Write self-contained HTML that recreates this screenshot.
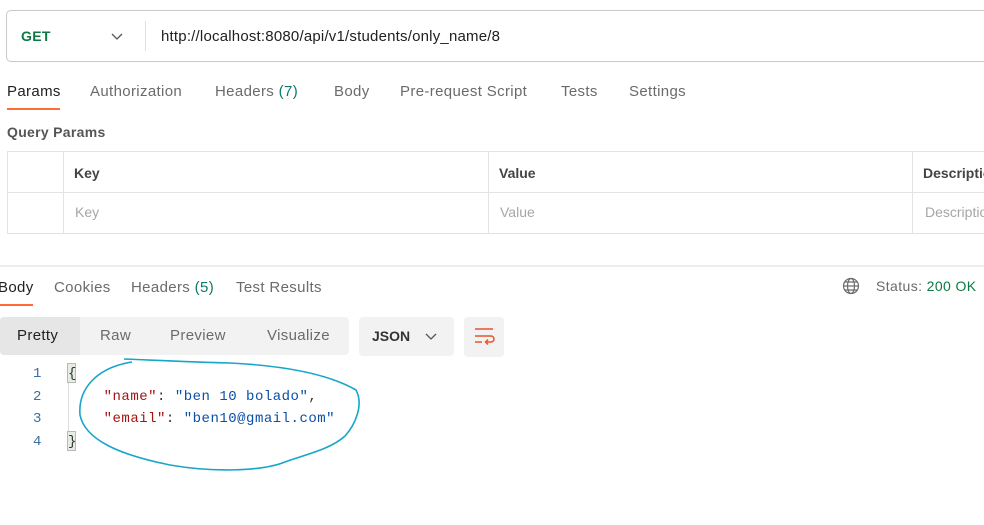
<!DOCTYPE html>
<html><head><meta charset="utf-8"><style>
*{margin:0;padding:0;box-sizing:border-box}
body{width:984px;height:525px;overflow:hidden;background:#fff;font-family:"Liberation Sans",Arial,sans-serif;position:relative;color:#212121}
.a{position:absolute;white-space:nowrap}
.tab{font-size:15px;color:#6b6b6b;letter-spacing:0.35px}
.mono{font-family:"Liberation Mono","DejaVu Sans Mono",monospace;font-size:14px;letter-spacing:0.5px}
</style></head><body>
<div class="a" style="left:6px;top:10px;width:990px;height:52px;border:1px solid #c9c9c9;border-radius:5px"></div>
<div class="a" style="left:21px;top:28px;font-size:14px;font-weight:bold;color:#0c7a43;letter-spacing:0.3px">GET</div>
<svg class="a" style="left:111px;top:31px" width="12" height="10"><path d="M1 3 L6 8 L11 3" stroke="#555" stroke-width="1.3" fill="none"/></svg>
<div class="a" style="left:145px;top:21px;width:1px;height:30px;background:#e0e0e0"></div>
<div class="a" style="left:161px;top:28px;font-size:15px;color:#212121;letter-spacing:0.2px">http://localhost:8080/api/v1/students/only_name/8</div>

<div class="a tab" style="left:7px;top:83px;color:#212121">Params</div>
<div class="a" style="left:7px;top:108px;width:53px;height:2px;background:#ff6c37"></div>
<div class="a tab" style="left:90px;top:83px">Authorization</div>
<div class="a tab" style="left:215px;top:83px">Headers <span style="color:#0c7a6a">(7)</span></div>
<div class="a tab" style="left:334px;top:83px">Body</div>
<div class="a tab" style="left:400px;top:83px">Pre-request Script</div>
<div class="a tab" style="left:561px;top:83px">Tests</div>
<div class="a tab" style="left:629px;top:83px">Settings</div>

<div class="a" style="left:7px;top:124px;font-size:14px;font-weight:bold;color:#555;letter-spacing:0.3px">Query Params</div>
<div class="a" style="left:7px;top:151px;width:990px;height:83px;border:1px solid #e3e3e3"></div>
<div class="a" style="left:7px;top:192px;width:990px;height:1px;background:#e3e3e3"></div>
<div class="a" style="left:63px;top:151px;width:1px;height:83px;background:#e3e3e3"></div>
<div class="a" style="left:488px;top:151px;width:1px;height:83px;background:#e3e3e3"></div>
<div class="a" style="left:912px;top:151px;width:1px;height:83px;background:#e3e3e3"></div>
<div class="a" style="left:74px;top:165px;font-size:14px;font-weight:bold;color:#444">Key</div>
<div class="a" style="left:499px;top:165px;font-size:14px;font-weight:bold;color:#444">Value</div>
<div class="a" style="left:923px;top:165px;font-size:14px;font-weight:bold;color:#444">Description</div>
<div class="a" style="left:75px;top:204px;font-size:14px;color:#a6a6a6">Key</div>
<div class="a" style="left:500px;top:204px;font-size:14px;color:#a6a6a6">Value</div>
<div class="a" style="left:925px;top:204px;font-size:14px;color:#a6a6a6">Description</div>

<div class="a" style="left:0;top:265px;width:984px;height:2px;background:#ededed"></div>
<div class="a tab" style="left:-2px;top:279px;color:#212121">Body</div>
<div class="a" style="left:0;top:304px;width:33px;height:2px;background:#ff6c37"></div>
<div class="a tab" style="left:54px;top:279px">Cookies</div>
<div class="a tab" style="left:131px;top:279px">Headers <span style="color:#0c7a6a">(5)</span></div>
<div class="a tab" style="left:236px;top:279px">Test Results</div>
<svg class="a" style="left:842px;top:277px" width="18" height="18" fill="none" stroke="#6b6b6b" stroke-width="1.2"><circle cx="9" cy="9" r="7.5"/><ellipse cx="9" cy="9" rx="3.5" ry="7.5"/><path d="M1.5 9H16.5M3 5H15M3 13H15"/></svg>
<div class="a" style="left:876px;top:278px;font-size:14px;color:#6b6b6b;letter-spacing:0.4px">Status: <span style="color:#0c7a43">200 OK</span></div>

<div class="a" style="left:0;top:317px;width:349px;height:38px;background:#f2f2f2;border-radius:4px"></div>
<div class="a" style="left:0;top:317px;width:80px;height:38px;background:#e6e6e6;border-radius:4px 0 0 4px"></div>
<div class="a tab" style="left:17px;top:327px;color:#212121">Pretty</div>
<div class="a tab" style="left:100px;top:327px">Raw</div>
<div class="a tab" style="left:170px;top:327px">Preview</div>
<div class="a tab" style="left:267px;top:327px">Visualize</div>
<div class="a" style="left:359px;top:317px;width:95px;height:39px;background:#f2f2f2;border-radius:4px"></div>
<div class="a" style="left:372px;top:328px;font-size:14px;font-weight:bold;color:#333">JSON</div>
<svg class="a" style="left:425px;top:331px" width="12" height="10"><path d="M1 3 L6 8 L11 3" stroke="#555" stroke-width="1.3" fill="none"/></svg>
<div class="a" style="left:464px;top:317px;width:40px;height:40px;background:#f2f2f2;border-radius:4px"></div>
<svg class="a" style="left:474px;top:326px" width="22" height="22" fill="none" stroke="#e8542a" stroke-width="1.5"><path d="M1 3H19M1 10H17a3 3 0 0 1 0 6H12M14 13.5L11.5 16L14 18.5M1 16H8"/></svg>

<div class="a mono" style="left:33px;top:363px;color:#3b6fa0;line-height:22.5px">1<br>2<br>3<br>4</div>
<div class="a" style="left:67px;top:363px;width:9px;height:20px;border:1px solid #b9b9b9;background:#e8ede4"></div>
<div class="a" style="left:67px;top:431px;width:9px;height:20px;border:1px solid #b9b9b9;background:#e8ede4"></div>
<div class="a" style="left:68px;top:383px;width:1px;height:48px;background:#ddd"></div>
<div class="a mono" style="left:68px;top:363px;line-height:22.5px;color:#333">{<br>&nbsp;&nbsp;&nbsp;&nbsp;<span style="color:#a31515">"name"</span>: <span style="color:#0b4fa6">"ben 10 bolado"</span>,<br>&nbsp;&nbsp;&nbsp;&nbsp;<span style="color:#a31515">"email"</span>: <span style="color:#0b4fa6">"ben10@gmail.com"</span><br>}</div>

<svg class="a" style="left:0;top:0" width="984" height="525" fill="none" stroke="#17a6c9" stroke-width="1.6"><path d="M124 359 C150 360 190 362 230 363 C290 366 330 375 356 390 C364 405 355 425 345 436 C330 450 300 456 285 462 C260 472 210 472 170 465 C120 455 85 440 80 415 C78 390 95 368 132 362"/></svg>
</body></html>
